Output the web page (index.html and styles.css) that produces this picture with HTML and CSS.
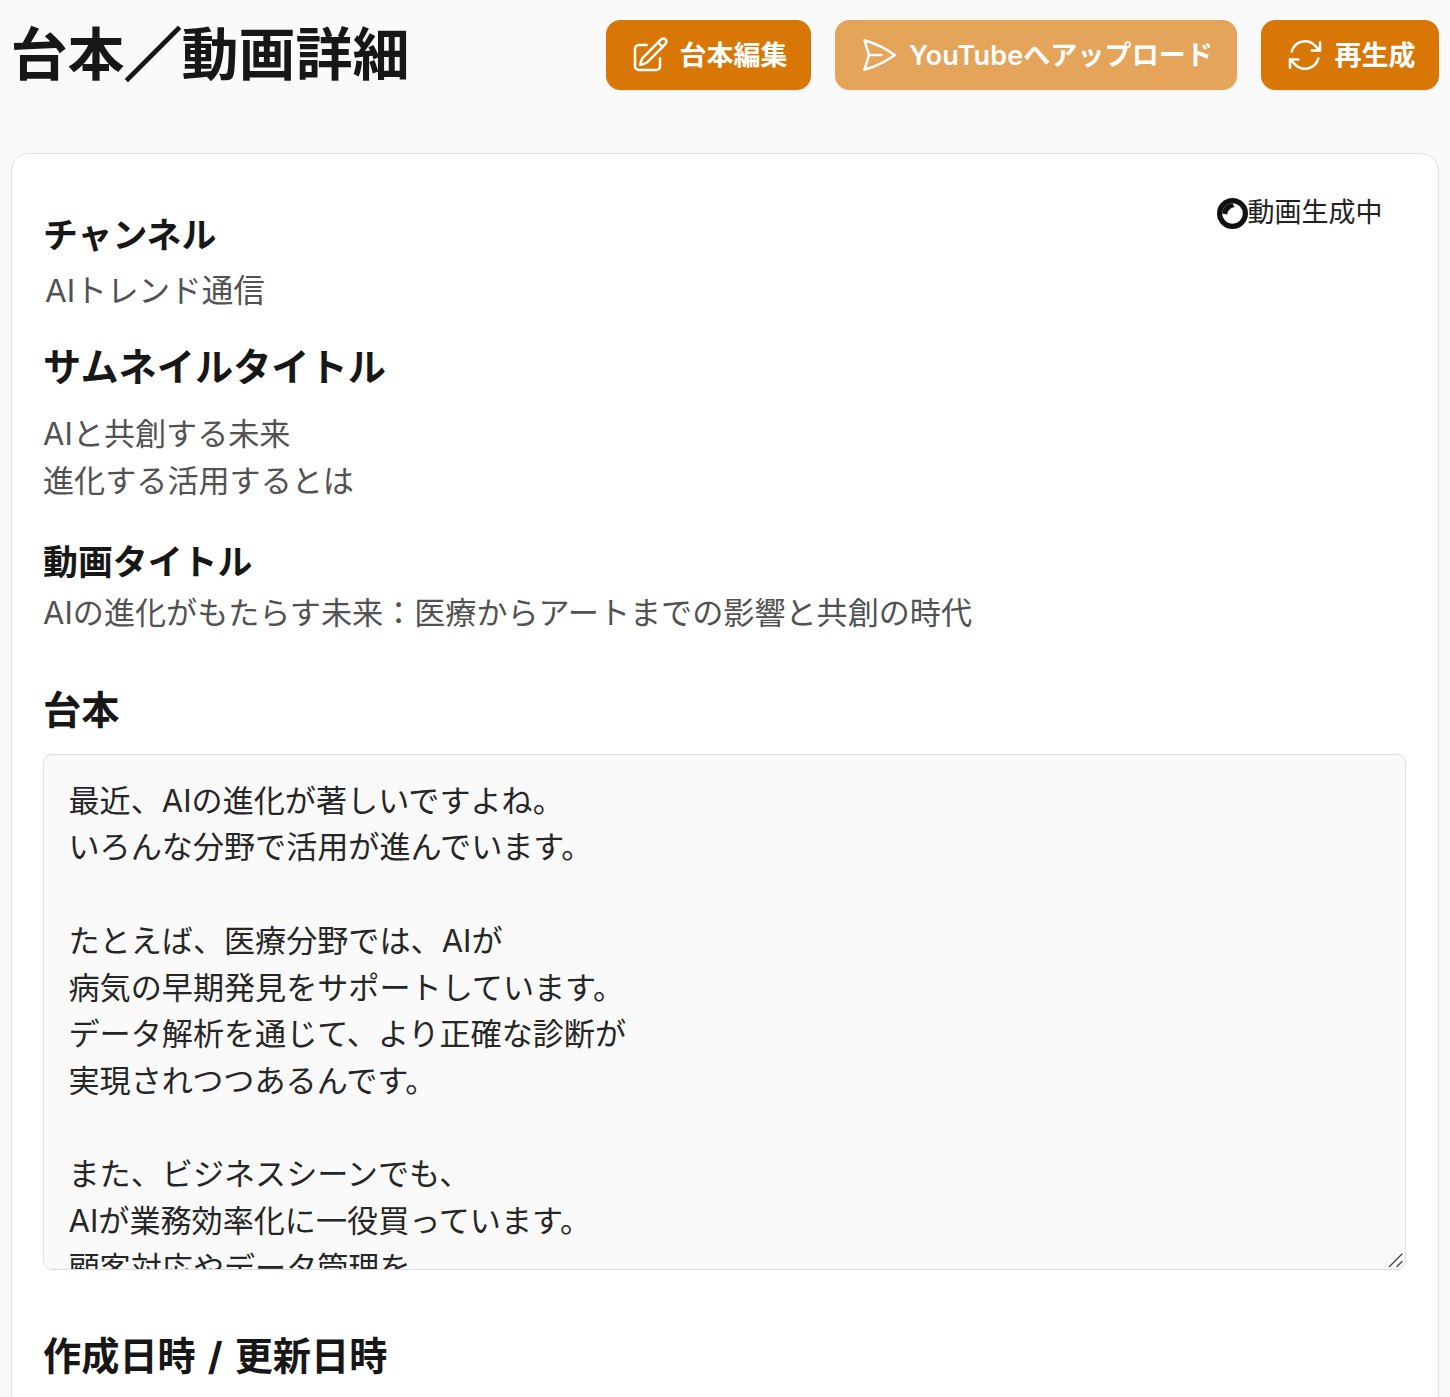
FILE: index.html
```html
<!DOCTYPE html>
<html lang="ja">

<head>
    <meta charset="UTF-8">
    <meta name="viewport" content="width=device-width, initial-scale=1.0">
    <title>台本／動画詳細</title>
    <link rel="stylesheet" href="styles.css">
</head>

<body>
    <div class="page">
        <header class="header">
            <h1 class="page-title">台本<span class="slash">／</span>動画詳細</h1>
            <div class="actions">
                <button class="btn">
                    <svg class="btn-icon" viewBox="0 0 24 24" fill="none" stroke="currentColor" stroke-width="1.5" stroke-linecap="round" stroke-linejoin="round">
                        <path d="M16.86 4.49l1.69-1.69a1.88 1.88 0 1 1 2.65 2.65L10.58 16.07a4.5 4.5 0 0 1-1.9 1.13L6 18l.8-2.68a4.5 4.5 0 0 1 1.13-1.9L16.86 4.49zm0 0L19.5 7.13"/>
                        <path d="M18 14v4.75A2.25 2.25 0 0 1 15.75 21H5.25A2.25 2.25 0 0 1 3 18.75V8.25A2.25 2.25 0 0 1 5.25 6H10"/>
                    </svg>
                    <span class="btn-text">台本編集</span>
                </button>
                <button class="btn btn-disabled">
                    <svg class="btn-icon" viewBox="0 0 24 24" fill="none" stroke="currentColor" stroke-width="1.5" stroke-linecap="round" stroke-linejoin="round">
                        <path d="M6 12L3.27 3.13A59.77 59.77 0 0 1 21.49 12 59.77 59.77 0 0 1 3.27 20.88L6 12zm0 0h7.5"/>
                    </svg>
                    <span class="btn-text btn-text-wide">YouTubeへアップロード</span>
                </button>
                <button class="btn">
                    <svg class="btn-icon" viewBox="0 0 24 24" fill="none" stroke="currentColor" stroke-width="1.5" stroke-linecap="round" stroke-linejoin="round">
                        <path d="M16.02 9.35h4.99V4.36M2.99 19.64v-4.99h4.99"/>
                        <path d="M2.99 14.65l3.18 3.18a8.25 8.25 0 0 0 13.8-3.7M4.03 9.87a8.25 8.25 0 0 1 13.8-3.7l3.18 3.18"/>
                    </svg>
                    <span class="btn-text">再生成</span>
                </button>
            </div>
        </header>

        <main class="card">
            <div class="status">
                <svg class="spinner" viewBox="0 0 30 30">
                    <circle cx="15" cy="15" r="12.5" fill="#fff" stroke="#111" stroke-width="5"/>
                    <path d="M5 15a10 10 0 0 1 10-10l2 4a7 7 0 0 0-7 7z" fill="#111"/>
                </svg>
                <span>動画生成中</span>
            </div>

            <section class="field-channel">
                <h3 class="label-md">チャンネル</h3>
                <p class="channel-name">AIトレンド通信</p>
            </section>

            <section class="field-thumb">
                <h2 class="label-lg">サムネイルタイトル</h2>
                <p class="value">AIと共創する未来<br>進化する活用するとは</p>
            </section>

            <section class="field-title">
                <h3 class="label-md">動画タイトル</h3>
                <p class="value">AIの進化がもたらす未来：医療からアートまでの影響と共創の時代</p>
            </section>

            <section class="field-script">
                <h2 class="label-lg">台本</h2>
                <div class="script-wrap">
                    <textarea class="script" readonly>最近、AIの進化が著しいですよね。
いろんな分野で活用が進んでいます。

たとえば、医療分野では、AIが
病気の早期発見をサポートしています。
データ解析を通じて、より正確な診断が
実現されつつあるんです。

また、ビジネスシーンでも、
AIが業務効率化に一役買っています。
顧客対応やデータ管理を
自動化することで、</textarea>
                    <svg class="grip" viewBox="0 0 16 16" fill="none" stroke="#444" stroke-width="1.4" stroke-linecap="round">
                        <path d="M1.5 14.5L14 2M9 14.5L14 9.5"/>
                    </svg>
                </div>
            </section>

            <section class="field-dates">
                <h2 class="label-lg label-dates">作成日時 / 更新日時</h2>
            </section>
        </main>
    </div>
</body>

</html>
```

FILE: styles.css
```css
html,
body {
    height: 100%;
    overflow: hidden;
}

body {
    margin: 0;
    background-color: #fafafa;
    color: #171717;
    font-family: Inter, "Noto Sans CJK JP", sans-serif;
}

h1,
h2,
h3,
p {
    margin: 0;
}

.page {
    padding: 20px 11px 0 10.5px;
}

.header {
    display: flex;
    align-items: center;
    justify-content: space-between;
    margin-bottom: 63px;
}

.page-title {
    font-size: 57px;
    line-height: 70px;
    font-weight: 700;
}

.slash {
    -webkit-text-stroke: 2px #171717;
}

.actions {
    display: flex;
    gap: 24px;
}

.btn {
    display: flex;
    align-items: center;
    gap: 10px;
    height: 70px;
    padding: 0 22.5px 0 23px;
    border: 1px solid #d97706;
    border-radius: 14px;
    background-color: #d97706;
    color: #fff;
    font-family: inherit;
    font-size: 27px;
    font-weight: 600;
    cursor: pointer;
    box-shadow: 0 1px 2px rgba(0, 0, 0, 0.08);
}

.btn-text {
    padding-bottom: 4px;
}

.btn-text-wide {
    letter-spacing: 0.11px;
}

.btn-disabled {
    opacity: 0.65;
}

.btn-icon {
    width: 40px;
    height: 40px;
    flex-shrink: 0;
}

.card {
    position: relative;
    height: 1300px;
    padding: 60px 32px 0 31.5px;
    background-color: #fff;
    border: 1px solid #e2e2e2;
    border-radius: 18px;
    box-shadow: 0 1px 2px rgba(0, 0, 0, 0.04);
}

.status {
    position: absolute;
    top: 43px;
    right: 55.5px;
    display: flex;
    align-items: center;
    font-size: 27px;
    line-height: 32px;
    color: #222;
}

.spinner {
    width: 31px;
    height: 31px;
}

.label-md {
    padding-bottom: 2px;
    font-size: 34.9px;
    line-height: 42px;
    font-weight: 700;
}

.label-lg {
    padding-bottom: 2px;
    font-size: 38.2px;
    line-height: 48px;
    font-weight: 700;
}

.label-dates {
    word-spacing: 3px;
}

.channel-name {
    margin-top: 10px;
    padding-left: 2px;
    font-size: 31.6px;
    line-height: 46px;
    color: #525252;
}

.value {
    font-size: 31.1px;
    line-height: 46.6px;
    color: #525252;
}

.field-thumb {
    margin-top: 29px;
}

.field-thumb .value {
    margin-top: 18px;
}

.field-title {
    margin-top: 37px;
}

.field-title .value {
    margin-top: 5px;
}

.field-script {
    margin-top: 49px;
}

.script-wrap {
    position: relative;
    margin-top: 18px;
}

.script {
    display: block;
    box-sizing: border-box;
    width: 100%;
    height: 516px;
    padding: 23px 24.5px;
    background-color: #fafafa;
    border: 1px solid #dedede;
    border-radius: 9px;
    color: #262626;
    font-family: inherit;
    font-size: 31.1px;
    line-height: 46.7px;
    overflow: hidden;
    resize: none;
    outline: none;
}

.grip {
    position: absolute;
    right: 2px;
    bottom: 2px;
    width: 16px;
    height: 16px;
}

.field-dates {
    margin-top: 62px;
}
```
